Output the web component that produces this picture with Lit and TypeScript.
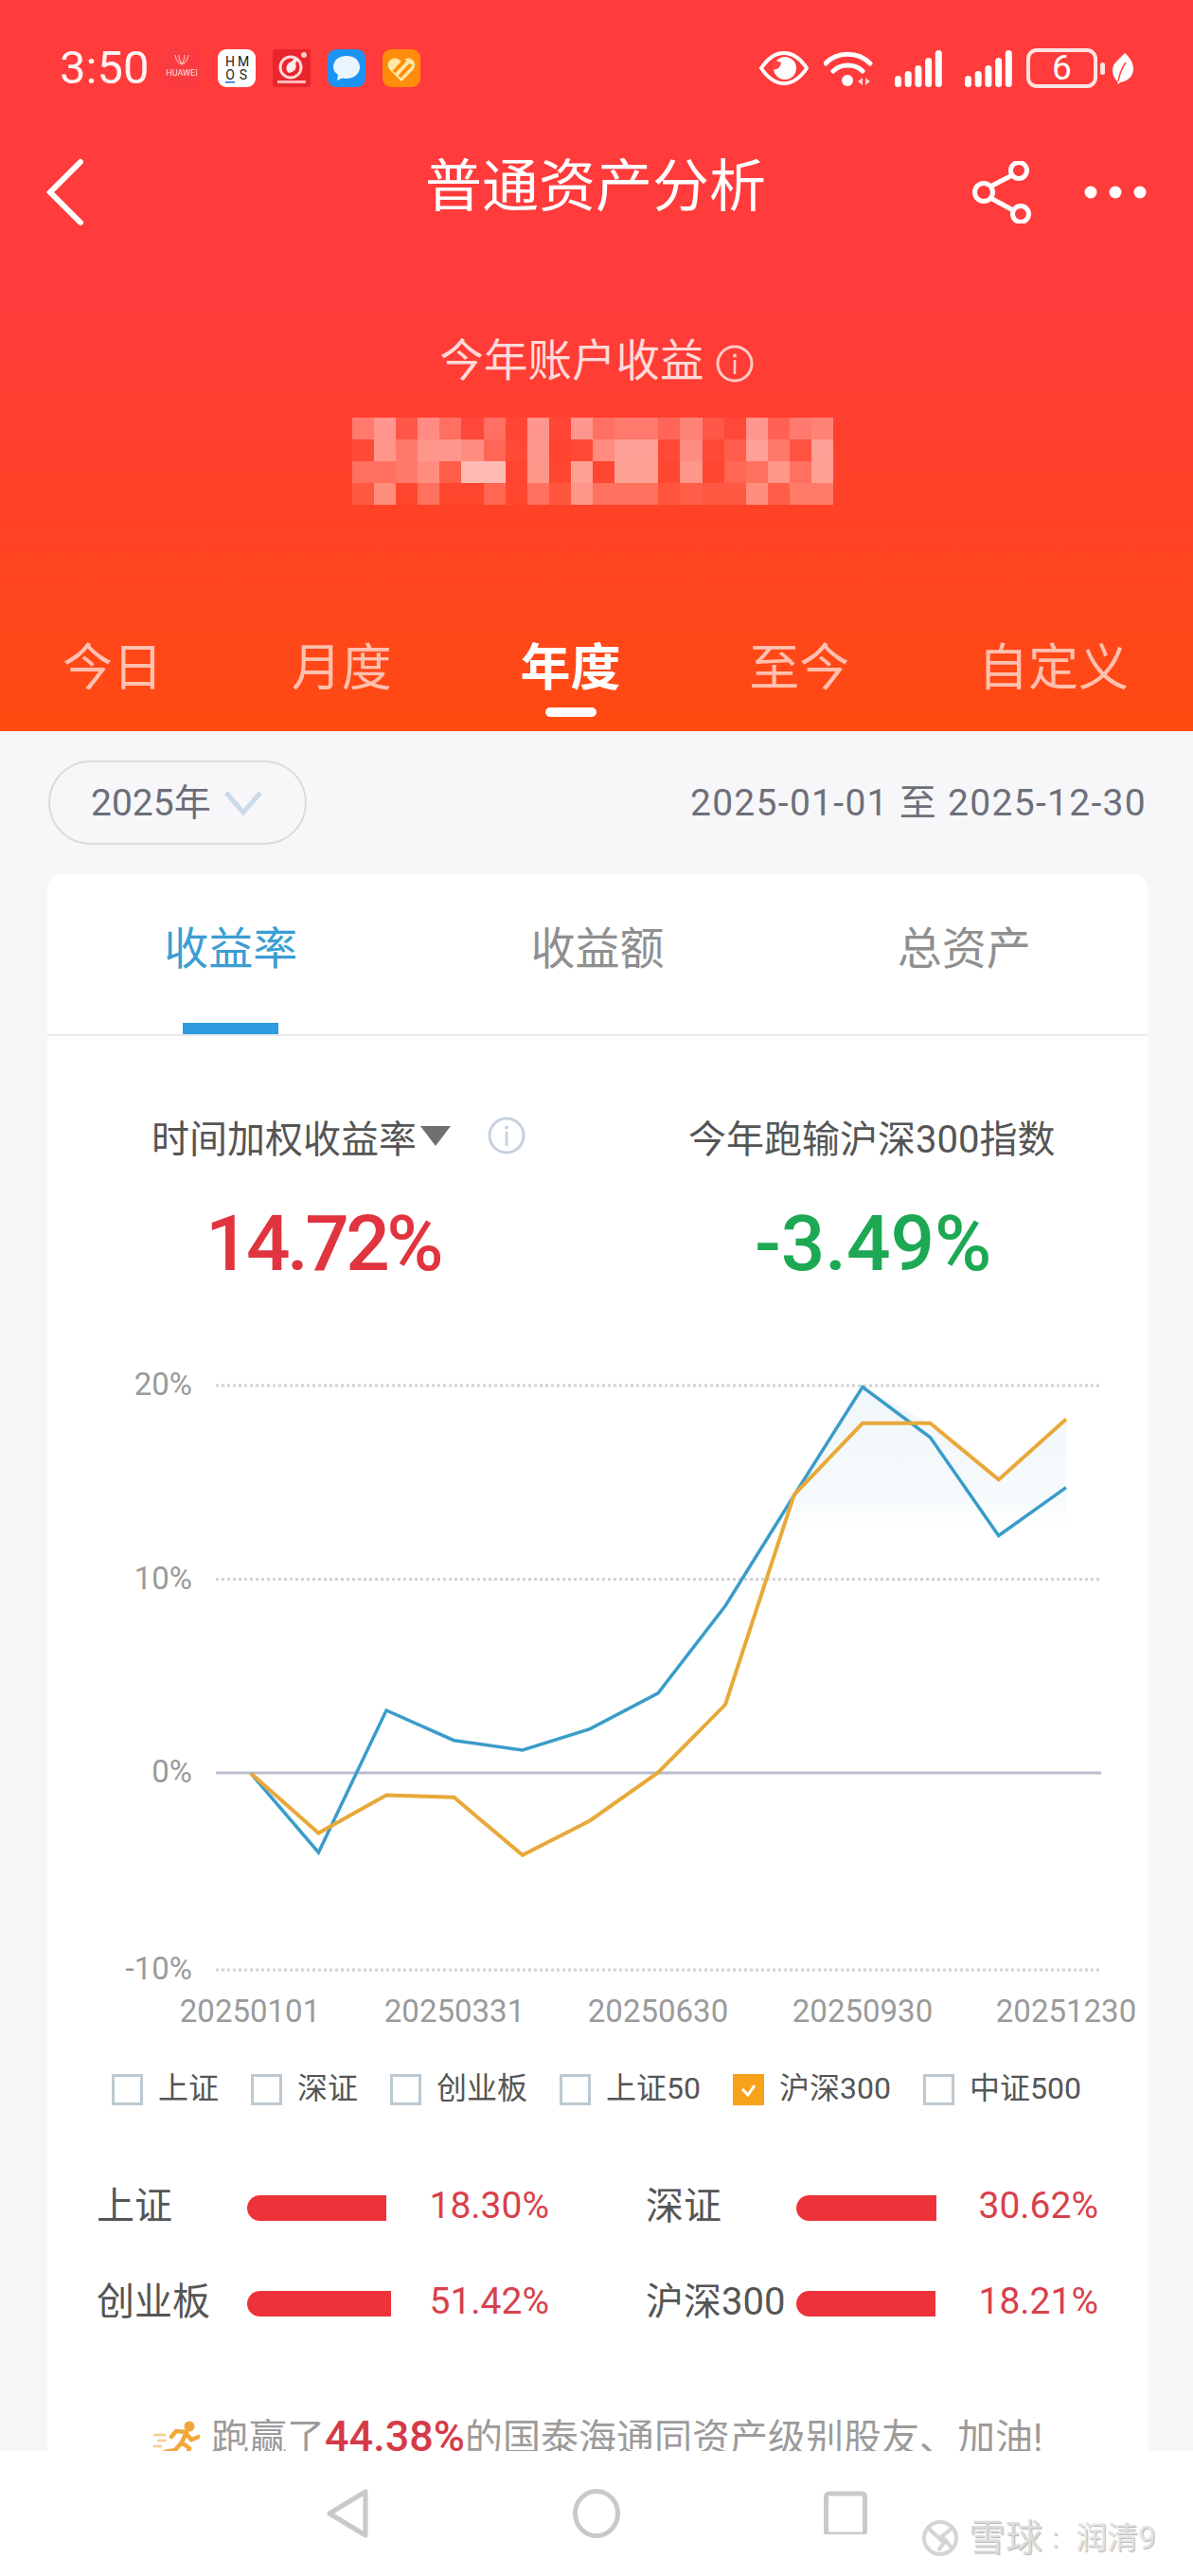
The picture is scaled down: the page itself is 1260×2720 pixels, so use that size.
import { LitElement, html, css, svg } from "lit";
import { customElement } from "lit/decorators.js";

const X = [265, 336.4, 408, 479.5, 551.8, 623, 695, 766, 838.7, 911, 982.5, 1054.7, 1126];
const BLUE = [1872.6, 1956, 1806, 1837.7, 1848, 1825.6, 1787.8, 1695.7, 1579, 1464.5, 1517.8, 1621.5, 1570.6];
const ORANGE = [1872.6, 1935.6, 1895.4, 1897.8, 1958.9, 1922.5, 1871.6, 1800, 1578.4, 1502.8, 1502.8, 1562.4, 1498.4];
const pts = (ys: number[]) => ys.map((y, i) => `${X[i]},${y}`).join(" ");

const MOSAIC = [
  [.3, .45, .12, .4, .25, .05, .25, .03, .45, .03, .45, .25, .3, .3, .2, .35, .12, .05, .45, .18, .3, .35],
  [.05, .45, .3, .45, .45, .4, .2, .05, .45, .02, .05, .4, .5, .5, .05, .4, .05, .15, .5, .3, .1, .5],
  [.25, .25, .3, .4, .15, .65, .65, .03, .45, .03, .5, .03, .5, .5, .03, .45, .03, .2, .25, .45, .25, .5],
  [.12, .4, .03, .25, .03, .03, .2, .03, .25, .1, .45, .25, .25, .25, .1, .15, .12, .12, .4, .15, .3, .3],
];

const LEGEND = [
  { t: "上证" }, { t: "深证" }, { t: "创业板" }, { t: "上证50" }, { t: "沪深300", on: true }, { t: "中证500" },
];
const COMPARE = [
  { n: "上证", w: 147, v: "18.30%" },
  { n: "深证", w: 148, v: "30.62%" },
  { n: "创业板", w: 152, v: "51.42%" },
  { n: "沪深300", w: 147, v: "18.21%" },
];

@customElement("app-root")
export class AppRoot extends LitElement {
  static styles = css`
    :host {
      display: flex;
      flex-direction: column;
      width: 1260px;
      height: 2720px;
      overflow: hidden;
      background: #f7f7f9;
      position: relative;
      font-family: Roboto, "Noto Sans CJK SC", sans-serif;
    }
    svg { display: block; flex: none; }
    .head {
      flex: none;
      height: 772px;
      background: linear-gradient(#ff3b3c 0, #ff3b3b 42%, #ff4a10 100%);
      color: #fff;
    }
    .status {
      height: 144px;
      display: flex;
      align-items: center;
      padding: 0 62px 0 63px;
    }
    .time { font-size: 49px; line-height: 48px; color: #fff3f3; width: 109px; }
    .apps { display: flex; gap: 18px; }
    .sys { margin-left: auto; display: flex; align-items: center; }
    .eye { margin-right: 16px; }
    .wifi { margin-right: 23px; }
    .sig { margin-right: 24px; }
    .sig.last { margin-right: 15px; }
    .batt {
      width: 75px;
      height: 42px;
      box-sizing: border-box;
      border: 4px solid #ffe3e3;
      border-radius: 11px;
      display: flex;
      align-items: center;
      justify-content: center;
      font-size: 37px;
      line-height: 32px;
      color: #fff;
    }
    .nub { width: 5px; height: 13px; border-radius: 3px; background: #ffe3e3; margin: 0 7px 0 3px; }
    .nav {
      height: 118px;
      display: grid;
      grid-template-columns: 1fr auto 1fr;
      align-items: center;
      padding: 0 48px 0 46px;
    }
    .title { font-size: 60px; line-height: 70px; margin-bottom: 10px; font-weight: 400; color: #fff; }
    .nav-r { display: flex; justify-content: flex-end; align-items: center; gap: 52px; }
    .sum {
      padding-top: 96px;
      display: flex;
      align-items: center;
      justify-content: center;
      gap: 12px;
      font-size: 46.5px;
      line-height: 46px;
      color: rgba(255, 255, 255, .82);
    }
    .sum .info { margin-top: 6px; }
    .mosaic {
      margin: 37px 0 0 372px;
      display: grid;
      grid-template-columns: repeat(22, 23.1px);
      grid-auto-rows: 23px;
      width: 509px;
    }
    .periods {
      margin-top: 147px;
      padding: 0 68px 0 66px;
      display: flex;
      justify-content: space-between;
      align-items: flex-start;
    }
    .period {
      display: flex;
      flex-direction: column;
      align-items: center;
      font-size: 53px;
      line-height: 52px;
      color: rgba(255, 255, 255, .66);
    }
    .period.on { color: #fff; font-weight: 700; }
    .bar { width: 54px; height: 10px; border-radius: 5px; background: #fff; margin-top: 15px; }
    .main { flex: 1; min-height: 0; overflow: hidden; padding: 31px 48px 0 50px; }
    .filter { display: flex; align-items: center; justify-content: space-between; padding: 0 1px 0 1px; }
    .pill {
      width: 273px;
      height: 89px;
      box-sizing: border-box;
      border: 2px solid #dcdcdf;
      border-radius: 45px;
      display: flex;
      align-items: center;
      padding-left: 43px;
      gap: 13px;
      font-size: 39px;
      color: #6b6d78;
    }
    .pill span { margin-bottom: 8px; }
    .dates { font-size: 39px; letter-spacing: 1.3px; color: #6d6f7a; margin-bottom: 8px; white-space: nowrap; }
    .card {
      margin-top: 31px;
      background: #fff;
      border-radius: 16px 16px 0 0;
      height: 1700px;
    }
    .ctabs {
      display: grid;
      grid-template-columns: repeat(3, 1fr);
      border-bottom: 2px solid #ebebeb;
      padding-top: 56px;
    }
    .ctab {
      display: flex;
      flex-direction: column;
      align-items: center;
      font-size: 47px;
      line-height: 46px;
      color: #8f8f8f;
    }
    .ctab.on { color: #3b9dd3; }
    .ind { width: 101px; height: 12px; margin-top: 55px; }
    .ctab.on .ind { background: #2f9be0; }
    .stats { display: flex; padding: 90px 0 0 110px; }
    .stat { display: flex; flex-direction: column; }
    .stat.a { width: 567px; }
    .label { display: flex; align-items: center; font-size: 40px; line-height: 40px; color: #555; height: 40px; }
    .label .tri { margin: 0 39px 10px 4px; }
    .label .info { margin-bottom: 10px; }
    .value { font-size: 82px; line-height: 80px; margin-top: 49px; font-weight: 500; }
    .value.up { color: #e0343f; margin-left: 57px; letter-spacing: -3.6px; }
    .value.down { color: #1da853; margin-left: 70px; letter-spacing: -.1px; }
    .chart { margin-top: 85px; }
    .axis { font-size: 33px; fill: #9a9a9a; font-family: Roboto, sans-serif; }
    .legend { display: flex; gap: 34px; margin-top: 29px; padding-left: 68px; }
    .li { display: flex; align-items: center; gap: 16px; font-size: 32px; line-height: 33px; color: #555; }
    .li span { margin-bottom: 2px; }
    .box { width: 33px; height: 33px; box-sizing: border-box; border: 3px solid #bdc9d0; }
    .box.on { background: #f7a21b; border-color: #f7a21b; display: flex; align-items: center; justify-content: center; }
    .cmp {
      margin-top: 80px;
      padding-left: 52px;
      display: grid;
      grid-template-columns: 478px 478px;
      column-gap: 102px;
      row-gap: 51px;
    }
    .row { display: flex; align-items: center; height: 50px; }
    .row .n { width: 159px; font-size: 40px; color: #555; white-space: nowrap; margin-bottom: 6px; }
    .row .b { height: 27px; background: #ee323a; border-radius: 13.5px 0 0 13.5px; margin-top: 5px; }
    .row .v { margin-left: auto; font-size: 39px; color: #d8414c; }
    .foot {
      margin-top: 98px;
      padding-left: 111px;
      display: flex;
      align-items: center;
      gap: 12px;
      font-size: 40px;
      line-height: 40px;
      color: #9b9b9b;
      white-space: nowrap;
    }
    .foot b { font-size: 45px; font-weight: 500; color: #d53b47; }
    .sysnav {
      flex: none;
      box-sizing: border-box;
      height: 132px;
      background: #fff;
      display: flex;
      align-items: flex-start;
      padding: 40px 0 0 344px;
      gap: 215px;
    }
    .mark {
      position: absolute;
      left: 973px;
      top: 2660px;
      height: 40px;
      display: flex;
      align-items: center;
      color: #dcdcdc;
      text-shadow: 1px 1px 1px #b4b4b4;
      white-space: nowrap;
    }
    .mark .m1 { font-size: 39px; line-height: 40px; margin-left: 10px; }
    .mark .m2 { font-size: 30px; line-height: 40px; margin-left: 10px; color: #e2e2e2; }
    .mark .m3 { font-size: 33px; line-height: 40px; margin-left: 18px; color: #e2e2e2; }
  `;

  private apps() {
    return html`<div class="apps">
      <svg width="40" height="40" viewBox="0 0 40 40">
        <rect width="40" height="40" rx="9" fill="#fa3c42"/>
        <path d="M13 6c1 6 4 9 7 10 3-1 6-4 7-10M17 6c0 4 1 7 3 9 2-2 3-5 3-9" fill="none" stroke="#ffb4b4" stroke-width="1.2"/>
        <text x="20" y="28" text-anchor="middle" font-size="9" fill="#ffdede" font-family="Roboto">HUAWEI</text>
      </svg>
      <svg width="40" height="40" viewBox="0 0 40 40">
        <rect width="40" height="40" rx="9" fill="#fff"/>
        <text x="13" y="18" text-anchor="middle" font-size="14" fill="#222" font-family="Roboto">H</text>
        <text x="27" y="18" text-anchor="middle" font-size="14" fill="#222" font-family="Roboto">M</text>
        <text x="13" y="32" text-anchor="middle" font-size="14" fill="#222" font-family="Roboto">O</text>
        <text x="27" y="32" text-anchor="middle" font-size="14" fill="#222" font-family="Roboto">S</text>
        <rect x="8" y="34" width="10" height="1.6" fill="#2a6fd0"/>
      </svg>
      <svg width="40" height="40" viewBox="0 0 40 40">
        <rect width="40" height="40" rx="3" fill="#e8262c"/>
        <circle cx="19" cy="19" r="11" fill="none" stroke="#ffd9d9" stroke-width="3"/>
        <path d="M17 25c-5-4-2-11 3-12l4-5 2 4-2 3c2 4 0 9-7 10z" fill="#ffe9e9"/>
        <circle cx="33" cy="6" r="3" fill="#ffc9c9"/>
        <rect x="5" y="33" width="30" height="3" fill="#ffb9b9"/>
      </svg>
      <svg width="40" height="40" viewBox="0 0 40 40">
        <rect width="40" height="40" rx="9" fill="#1c93f2"/>
        <path d="M20 7c9 0 14 5.500 14 12s-6 12-14 12c-2 0-3 0-4.500-.6L10 33l1-6c-3-2-5-5-5-8 0-6.500 5-12 14-12z" fill="#eaf6ff"/>
      </svg>
      <svg width="40" height="40" viewBox="0 0 40 40">
        <rect width="40" height="40" rx="9" fill="#ff8c0a"/>
        <path d="M20 34 8 22c-7-8 4-18 12-9 8-9 19 1 12 9z" fill="#ffe7a6"/>
        <path d="M12 24 24 11M18 29 30 16" stroke="#ff8c0a" stroke-width="4" fill="none"/>
      </svg>
    </div>`;
  }

  private sysIcons() {
    const sig = (last: boolean) => html`<svg class="sig ${last ? "last" : ""}" width="50" height="39" viewBox="0 0 50 39">
      ${[12, 17, 23, 31, 39].map((h, i) => svg`<rect x=${i * 10.7} y=${39 - h} width="7" height=${h} rx="3.500" fill="#fff"/>`)}
    </svg>`;
    return html`<div class="sys">
      <svg class="eye" width="52" height="36" viewBox="0 0 52 36">
        <path d="M2 18C10 6 18 2 26 2s16 4 24 16c-8 12-16 16-24 16S10 30 2 18z" fill="none" stroke="#fff" stroke-width="4"/>
        <circle cx="27" cy="18" r="12" fill="#fff"/>
        <path d="M14 19c3 1 8 0 9-7l-5-2c-3 2-4 5-4 9z" fill="#ff4545"/>
      </svg>
      <svg class="wifi" width="52" height="39" viewBox="0 0 52 39">
        <path d="M2 14C14 1 36 1 49 14M10 22c8-8 23-8 31 0" fill="none" stroke="#fff" stroke-width="5" stroke-linecap="round"/>
        <circle cx="25" cy="32" r="6" fill="#fff"/>
        <path d="M41 29l-5 4 5 4zM44 29l5 4-5 4z" fill="#ffd0d0"/>
      </svg>
      ${sig(false)}${sig(true)}
      <div class="batt">6</div>
      <div class="nub"></div>
      <svg width="24" height="33" viewBox="0 0 24 33">
        <path d="M14 0c7 6 11 14 8 22-2 5-7 8-13 9L7 33 6 30C0 24-1 15 5 9z" fill="#fff"/>
        <path d="M7 30c1-6 3-13 8-20" stroke="#ff4040" stroke-width="1.500" fill="none"/>
      </svg>
    </div>`;
  }

  private nav() {
    return html`<div class="nav">
      <svg width="44" height="72" viewBox="0 0 44 72">
        <polyline points="39,4 7,36 39,68" fill="none" stroke="#fff" stroke-width="6" stroke-linecap="round"/>
      </svg>
      <div class="title">普通资产分析</div>
      <div class="nav-r">
        <svg width="66" height="66" viewBox="0 0 66 66">
          <path d="M19 27 42 15M19 39l24 13" stroke="#fff" stroke-width="5" fill="none"/>
          <circle cx="12" cy="33" r="9.500" fill="none" stroke="#fff" stroke-width="5"/>
          <circle cx="49" cy="10" r="8.500" fill="none" stroke="#fff" stroke-width="5"/>
          <circle cx="51" cy="56" r="8.500" fill="none" stroke="#fff" stroke-width="5"/>
        </svg>
        <svg width="67" height="14" viewBox="0 0 67 14">
          <circle cx="7" cy="7" r="6.500" fill="#fff"/><circle cx="33" cy="7" r="6.500" fill="#fff"/><circle cx="59" cy="7" r="6.500" fill="#fff"/>
        </svg>
      </div>
    </div>`;
  }

  private info(color: string, sw: number) {
    return html`<svg class="info" width="40" height="40" viewBox="0 0 40 40">
      <circle cx="20" cy="20" r="18" fill="none" stroke=${color} stroke-width=${sw}/>
      <circle cx="20" cy="11.500" r="2" fill=${color}/>
      <rect x="18.700" y="16" width="2.600" height="15" fill=${color}/>
    </svg>`;
  }

  private chart() {
    const grid = [1463, 1667.5, 2080];
    const yLabels: [string, number][] = [["20%", 1461], ["10%", 1666], ["0%", 1870], ["-10%", 2078]];
    const xLabels: [string, number][] = [["20250101", 264], ["20250331", 480], ["20250630", 695], ["20250930", 911], ["20251230", 1126]];
    return html`<svg class="chart" width="1162" height="722" viewBox="50 1438 1162 722">
      <defs>
        <linearGradient id="fade" x1="0" y1="0" x2="0" y2="1">
          <stop offset="0" stop-color="#f0f6fa"/>
          <stop offset=".75" stop-color="#f6fafc"/>
          <stop offset="1" stop-color="#ffffff"/>
        </linearGradient>
      </defs>
      ${grid.map((y) => svg`<line x1="228" x2="1163" y1=${y} y2=${y} stroke="#d2d2d2" stroke-width="3" stroke-dasharray="3 3"/>`)}
      <line x1="228" x2="1163" y1="1872" y2="1872" stroke="#b9bdcd" stroke-width="3"/>
      <polygon points="838.700,1579 911,1465 982.500,1503 1054.700,1562 1126,1498 1126,1615 838.700,1615" fill="url(#fade)"/>
      <polyline points=${pts(BLUE)} fill="none" stroke="#3a9cc9" stroke-width="3.500"/>
      <polyline points=${pts(ORANGE)} fill="none" stroke="#e8a93a" stroke-width="4"/>
      ${yLabels.map(([t, y]) => svg`<text class="axis" x="203" y=${y + 12} text-anchor="end">${t}</text>`)}
      ${xLabels.map(([t, x]) => svg`<text class="axis" x=${x} y="2135" text-anchor="middle">${t}</text>`)}
    </svg>`;
  }

  render() {
    return html`
      <div class="head">
        <div class="status">
          <div class="time">3:50</div>
          ${this.apps()}
          ${this.sysIcons()}
        </div>
        ${this.nav()}
        <div class="sum"><span>今年账户收益</span>${this.info("rgba(255,255,255,.72)", 3)}</div>
        <div class="mosaic">
          ${MOSAIC.flat().map((o) => html`<div style="background:rgba(255,255,255,${o})"></div>`)}
        </div>
        <div class="periods">
          ${["今日", "月度", "年度", "至今", "自定义"].map((t) => html`<div class="period ${t === "年度" ? "on" : ""}">
            <span>${t}</span>${t === "年度" ? html`<div class="bar"></div>` : ""}
          </div>`)}
        </div>
      </div>

      <div class="main">
        <div class="filter">
          <div class="pill">
            <span>2025年</span>
            <svg width="42" height="28" viewBox="0 0 42 28"><polyline points="3,3 21,24 39,3" fill="none" stroke="#cbdbe8" stroke-width="5"/></svg>
          </div>
          <div class="dates">2025-01-01 至 2025-12-30</div>
        </div>
        <div class="card">
          <div class="ctabs">
            ${["收益率", "收益额", "总资产"].map((t, i) => html`<div class="ctab ${i === 0 ? "on" : ""}"><span>${t}</span><div class="ind"></div></div>`)}
          </div>
          <div class="stats">
            <div class="stat a">
              <div class="label">
                <span>时间加权收益率</span>
                <svg class="tri" width="32" height="21" viewBox="0 0 32 21"><polygon points="0,0 32,0 16,21" fill="#6f6f6f"/></svg>
                ${this.info("#c5d1de", 3)}
              </div>
              <div class="value up">14.72%</div>
            </div>
            <div class="stat">
              <div class="label">今年跑输沪深300指数</div>
              <div class="value down">-3.49%</div>
            </div>
          </div>
          ${this.chart()}
          <div class="legend">
            ${LEGEND.map((l) => html`<div class="li">
              <div class="box ${l.on ? "on" : ""}">
                ${l.on ? html`<svg width="17" height="14" viewBox="0 0 17 14"><polyline points="2,6 8,12 15,2" fill="none" stroke="#fff" stroke-width="3"/></svg>` : ""}
              </div>
              <span>${l.t}</span>
            </div>`)}
          </div>
          <div class="cmp">
            ${COMPARE.map((c) => html`<div class="row">
              <span class="n">${c.n}</span>
              <div class="b" style="width:${c.w}px"></div>
              <span class="v">${c.v}</span>
            </div>`)}
          </div>
          <div class="foot">
            <svg width="50" height="36" viewBox="0 0 50 36">
              <circle cx="39" cy="6" r="5.500" fill="#f3a73a"/>
              <path d="M36 12 25 11l-5 6M36 12l-5 11 8 6-2 7M31 23l-7 8-11 2M36 14l5 6 8-3" fill="none" stroke="#f3a73a" stroke-width="4.500" stroke-linecap="round"/>
              <path d="M1 15h13M5 21h10M1 27h9" stroke="#f7cd92" stroke-width="2.500"/>
            </svg>
            <span>跑赢了<b>44.38%</b>的国泰海通同资产级别股友、加油!</span>
          </div>
        </div>
      </div>

      <div class="sysnav">
        <svg width="46" height="52" viewBox="0 0 46 52"><path d="M42 3v46L4 26z" fill="none" stroke="#c9c9c9" stroke-width="5" stroke-linejoin="round"/></svg>
        <svg width="50" height="52" viewBox="0 0 50 52"><ellipse cx="25" cy="26" rx="22.500" ry="23.500" fill="none" stroke="#c9c9c9" stroke-width="5"/></svg>
        <svg width="46" height="48" viewBox="0 0 46 48"><rect x="2.500" y="5" width="41" height="43" rx="3" fill="none" stroke="#c9c9c9" stroke-width="5"/></svg>
      </div>
      <div class="mark">
        <svg width="40" height="40" viewBox="0 0 40 40">
          <circle cx="20" cy="20" r="17" fill="none" stroke="#d4d4d4" stroke-width="4"/>
          <path d="M8 10l16 15-6 8M32 10 22 18l10 12" fill="none" stroke="#d4d4d4" stroke-width="4"/>
        </svg>
        <span class="m1">雪球</span>
        <span class="m2">:</span>
        <span class="m3">润清9</span>
      </div>
    `;
  }
}
